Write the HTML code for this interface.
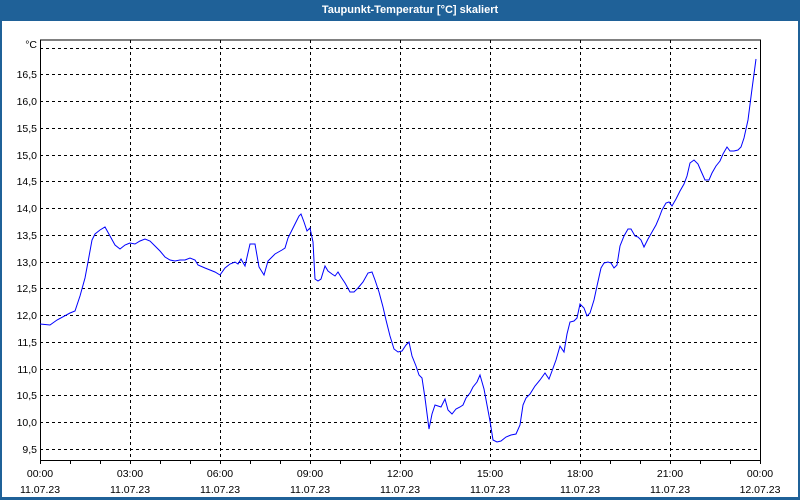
<!DOCTYPE html>
<html><head><meta charset="utf-8"><style>
html,body{margin:0;padding:0;background:#fff}
svg{display:block}
text{font-family:"Liberation Sans",Tahoma,sans-serif;font-size:10.5px;fill:#000}
</style></head><body>
<svg width="800" height="500" viewBox="0 0 800 500" xmlns="http://www.w3.org/2000/svg">
<rect x="0" y="0" width="800" height="500" fill="#1f6198"/>
<rect x="2" y="21" width="796" height="476" fill="#fff"/>
<text x="410" y="13" text-anchor="middle" style="fill:#fff;font-weight:bold;font-size:11px">Taupunkt-Temperatur [°C] skaliert</text>
<g stroke="#000" stroke-width="1" stroke-dasharray="3,3" fill="none">
<path d="M40 48.5H760M40 74.5H760M40 101.5H760M40 128.5H760M40 155.5H760M40 181.5H760M40 208.5H760M40 235.5H760M40 262.5H760M40 288.5H760M40 315.5H760M40 342.5H760M40 369.5H760M40 395.5H760M40 422.5H760M40 449.5H760"/>
<path d="M130.5 40V460M220.5 40V460M310.5 40V460M400.5 40V460M490.5 40V460M580.5 40V460M670.5 40V460"/>
</g>
<g stroke="#000" stroke-width="1" fill="none">
<path d="M40.5 40V460.5H760.5V40H40"/>
<path d="M40.5 460V464M70.5 460V464M100.5 460V464M130.5 460V464M160.5 460V464M190.5 460V464M220.5 460V464M250.5 460V464M280.5 460V464M310.5 460V464M340.5 460V464M370.5 460V464M400.5 460V464M430.5 460V464M460.5 460V464M490.5 460V464M520.5 460V464M550.5 460V464M580.5 460V464M610.5 460V464M640.5 460V464M670.5 460V464M700.5 460V464M730.5 460V464M760.5 460V464"/>
</g>
<g text-anchor="end">
<text x="37" y="48">°C</text>
<text x="37" y="78">16,5</text><text x="37" y="105">16,0</text><text x="37" y="132">15,5</text>
<text x="37" y="159">15,0</text><text x="37" y="185">14,5</text><text x="37" y="212">14,0</text>
<text x="37" y="239">13,5</text><text x="37" y="266">13,0</text><text x="37" y="292">12,5</text>
<text x="37" y="319">12,0</text><text x="37" y="346">11,5</text><text x="37" y="373">11,0</text>
<text x="37" y="399">10,5</text><text x="37" y="426">10,0</text><text x="37" y="453">9,5</text>
</g>
<g text-anchor="middle">
<text x="40" y="477">00:00</text><text x="40" y="493">11.07.23</text>
<text x="130" y="477">03:00</text><text x="130" y="493">11.07.23</text>
<text x="220" y="477">06:00</text><text x="220" y="493">11.07.23</text>
<text x="310" y="477">09:00</text><text x="310" y="493">11.07.23</text>
<text x="400" y="477">12:00</text><text x="400" y="493">11.07.23</text>
<text x="490" y="477">15:00</text><text x="490" y="493">11.07.23</text>
<text x="580" y="477">18:00</text><text x="580" y="493">11.07.23</text>
<text x="670" y="477">21:00</text><text x="670" y="493">11.07.23</text>
<text x="760" y="477">00:00</text><text x="760" y="493">12.07.23</text>
</g>
<polyline fill="none" stroke="#0000ff" stroke-width="1" points="40,324 50,325 57,320 70,313 75,311 80,296 85,278 88,262 92,240 95,234 100,230 105,227 110,236 115,245 120,249 125,245 130,243 135,244 140,241 145,239 150,241 155,246 160,251 165,257 170,260 175,261 180,260 185,260 190,258 195,260 198,265 205,268 215,272 220,275 225,268 230,264 235,262 238,264 241,259 245,266 250,244 255,244 259,267 264,275 268,261 275,254 282,250 285,248 288,238 292,230 296,222 299,216 301,214 304,222 307,231 310,228 313,242 315,279 318,281 321,279 325,266 328,271 332,274 335,276 338,272 341,277 345,283 350,292 354,292 358,288 363,282 368,273 372,272 375,280 379,292 383,307 386,320 390,336 394,349 398,352 402,351 406,345 409,342 412,356 416,366 419,375 422,378 425,398 429,429 432,414 435,405 438,406 441,407 445,399 448,410 452,414 456,409 460,407 463,405 466,398 470,393 473,387 477,382 480,375 484,389 487,405 490,421 493,440 497,442 501,441 506,437 511,435 516,434 520,425 523,405 526,398 530,394 535,386 540,380 545,373 549,379 552,371 556,360 560,346 564,352 567,334 570,322 574,321 577,318 580,304 584,308 587,316 590,313 594,300 597,286 601,268 604,263 608,262 611,263 614,268 617,265 620,246 624,236 628,229 631,229 635,236 638,237 641,240 644,247 648,239 652,232 656,225 659,218 662,210 666,203 669,202 672,206 676,199 680,191 684,184 687,176 690,163 694,160 698,164 701,171 705,180 709,180 712,173 716,166 720,161 723,154 727,147 730,151 734,151 738,150 741,147 744,138 748,120 752,89 756,59"/>
</svg>
</body></html>
